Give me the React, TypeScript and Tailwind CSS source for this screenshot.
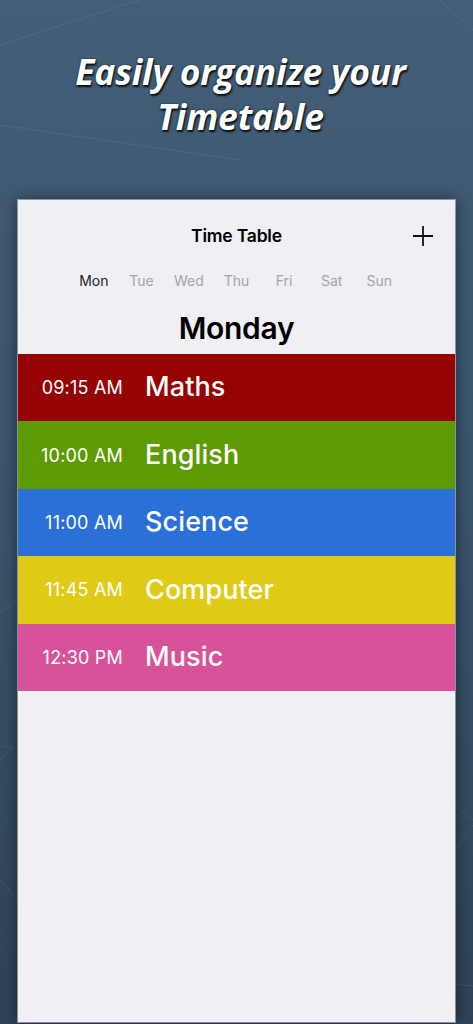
import React from "react";

const days = ["Mon", "Tue", "Wed", "Thu", "Fri", "Sat", "Sun"];

const rows = [
  { time: "09:15 AM", subject: "Maths", bg: "bg-[#960304]" },
  { time: "10:00 AM", subject: "English", bg: "bg-[#5e9a04]" },
  { time: "11:00 AM", subject: "Science", bg: "bg-[#2a70d7]" },
  { time: "11:45 AM", subject: "Computer", bg: "bg-[#dfcb16]" },
  { time: "12:30 PM", subject: "Music", bg: "bg-[#d8529a]" },
];

export default function App() {
  return (
    <div className="relative w-[473px] h-[1024px] overflow-hidden bg-gradient-to-b from-[#435e77] via-[#3a546b] to-[#2e4357] flex flex-col">
      <svg className="absolute inset-0 pointer-events-none" width="473" height="1024" viewBox="0 0 473 1024">
        <g stroke="rgba(255,255,255,0.08)" strokeWidth="1" fill="none">
          <line x1="0" y1="45" x2="140" y2="0" />
          <line x1="0" y1="125" x2="240" y2="160" />
          <line x1="0" y1="613" x2="18" y2="600" />
          <line x1="0" y1="745" x2="18" y2="750" />
          <line x1="0" y1="760" x2="18" y2="740" />
          <line x1="0" y1="880" x2="18" y2="900" />
          <line x1="455" y1="807" x2="473" y2="820" />
          <line x1="455" y1="850" x2="473" y2="825" />
          <line x1="455" y1="984" x2="473" y2="986" />
          <line x1="440" y1="0" x2="473" y2="30" />
        </g>
      </svg>
      <div className="relative h-[200px] flex flex-col items-center pt-[49px] pl-[8px]">
        <div
          className="text-white text-[35.5px] leading-[45px] font-bold italic text-center tracking-[-0.2px] [text-shadow:1px_2px_2px_rgba(0,0,0,0.85),0_0_2px_rgba(0,0,0,0.7)]"
          style={{ fontFamily: '"Open Sans", "Noto Sans", sans-serif' }}
        >
          <div>Easily organize your</div>
          <div>Timetable</div>
        </div>
      </div>
      <div
        className="relative mx-[18px] h-[822px] bg-[#efeff4] shadow-[0_0_0_1px_rgba(255,255,255,0.45),0_0_14px_rgba(0,0,0,0.55)] flex flex-col"
        style={{ fontFamily: 'Inter, "Noto Sans", sans-serif' }}
      >
        <div className="relative h-[72px] flex items-center justify-center">
          <span className="text-[17.5px] font-semibold text-black tracking-[-0.2px]">Time Table</span>
          <svg className="absolute right-[22px] top-[26px]" width="20" height="20" viewBox="0 0 20 20">
            <path d="M10 0 V20 M0 10 H20" stroke="#111" strokeWidth="1.8" />
          </svg>
        </div>
        <div className="h-[18px] flex justify-center">
          <div className="grid grid-cols-7 w-[333px]">
            {days.map((d, i) => (
              <span
                key={d}
                className={`text-center text-[14px] leading-[18px] ${i === 0 ? "text-[#222]" : "text-[#a5a5a8]"}`}
              >
                {d}
              </span>
            ))}
          </div>
        </div>
        <div className="h-[64px] flex items-center justify-center pt-[12px]">
          <span className="text-[30px] leading-[36px] font-semibold text-black tracking-[-0.3px]">Monday</span>
        </div>
        <div className="flex flex-col">
          {rows.map((r) => (
            <div key={r.subject} className={`${r.bg} h-[67.4px] flex items-center text-white`}>
              <span className="w-[105px] text-right text-[18px] tracking-[0.2px]">{r.time}</span>
              <span className="ml-[22px] text-[27px] font-medium tracking-[0.1px]">{r.subject}</span>
            </div>
          ))}
        </div>
      </div>
    </div>
  );
}
